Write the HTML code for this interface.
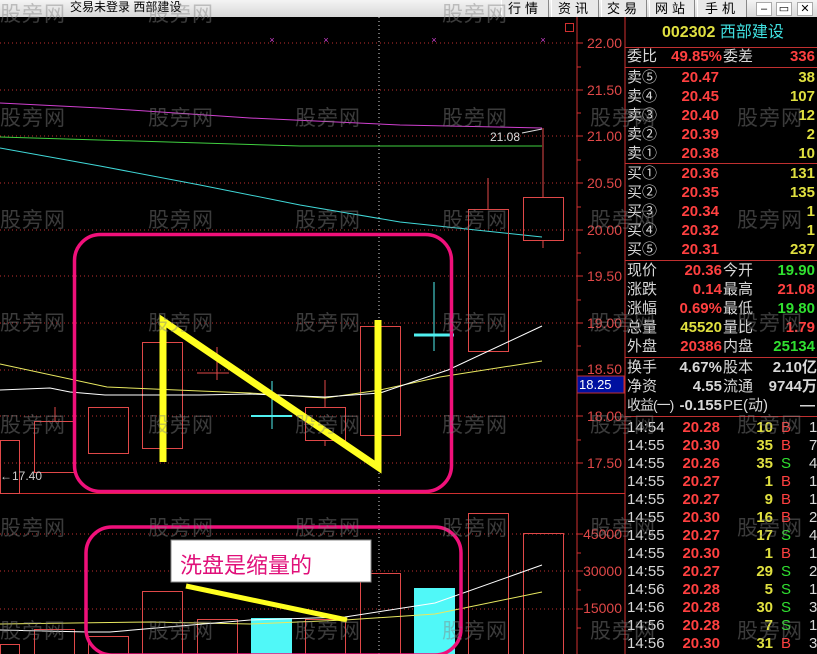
<!DOCTYPE html>
<html><head><meta charset="utf-8"><style>
*{margin:0;padding:0;box-sizing:border-box}
body{width:817px;height:654px;background:#000;overflow:hidden;position:relative;font-family:"Liberation Sans","Noto Sans CJK SC",sans-serif}
.a{position:absolute;white-space:nowrap}
#top{position:absolute;left:0;top:0;width:817px;height:17px;background:linear-gradient(#f4f4f4,#d8d8d8);}
.btn{position:absolute;top:0;height:17px;border-left:1px solid #fff;border-right:1px solid #888;background:#e8e8e8;font-size:13px;line-height:17px;text-align:center;color:#000;letter-spacing:4px}
.wc{position:absolute;top:2px;width:16px;height:14px;background:#fff;border:1px solid #aaa;font-size:11px;line-height:12px;text-align:center}
.p{font-size:15px;line-height:19px;position:absolute;white-space:nowrap}
.rr{font-weight:bold}
.w{color:#d8d8d8}.r{color:#ff4040}.y{color:#e0e040}.g{color:#30e030}.c{color:#40e0e0}
.rr{text-align:right}
.wm{position:absolute;color:rgba(130,130,130,.45);font-size:21px;white-space:nowrap;letter-spacing:1px}
</style></head><body>
<div id="top">
<div class="a" style="left:70px;top:0;font-size:12px;line-height:15px">交易未登录 西部建设</div>
<div class="btn" style="left:501px;width:48px">行情</div>
<div class="btn" style="left:551px;width:48px">资讯</div>
<div class="btn" style="left:601px;width:46px">交易</div>
<div class="btn" style="left:649px;width:46px">网站</div>
<div class="btn" style="left:697px;width:50px">手机</div>
<div class="wc" style="left:756px">–</div><div class="wc" style="left:776px">▭</div><div class="wc" style="left:797px">✕</div>
</div>
<svg class="a" style="left:0;top:0" width="817" height="654">
<g stroke="#c03030" stroke-dasharray="1 3" stroke-width="1">
<line x1="0" y1="43" x2="577" y2="43"/><line x1="0" y1="90" x2="577" y2="90"/><line x1="0" y1="136" x2="577" y2="136"/><line x1="0" y1="183" x2="577" y2="183"/><line x1="0" y1="230" x2="577" y2="230"/><line x1="0" y1="276" x2="577" y2="276"/><line x1="0" y1="323" x2="577" y2="323"/><line x1="0" y1="370" x2="577" y2="370"/><line x1="0" y1="416" x2="577" y2="416"/><line x1="0" y1="463" x2="577" y2="463"/>
<line x1="0" y1="534" x2="577" y2="534"/><line x1="0" y1="571" x2="577" y2="571"/><line x1="0" y1="609" x2="577" y2="609"/>
</g>
<line x1="379" y1="17" x2="379" y2="654" stroke="#ddd" stroke-dasharray="1 3"/>
<g stroke="#d03030" fill="none">
<line x1="577" y1="17" x2="577" y2="654"/><line x1="625" y1="17" x2="625" y2="654"/>
<line x1="0" y1="493.5" x2="625" y2="493.5"/>
<rect x="565.5" y="23.5" width="8" height="8"/>
</g>
<g stroke="#d03030">
<line x1="577" y1="43" x2="583" y2="43"/><line x1="577" y1="67" x2="581" y2="67"/><line x1="577" y1="90" x2="583" y2="90"/><line x1="577" y1="113" x2="581" y2="113"/><line x1="577" y1="136" x2="583" y2="136"/><line x1="577" y1="160" x2="581" y2="160"/><line x1="577" y1="183" x2="583" y2="183"/><line x1="577" y1="207" x2="581" y2="207"/><line x1="577" y1="230" x2="583" y2="230"/><line x1="577" y1="253" x2="581" y2="253"/><line x1="577" y1="276" x2="583" y2="276"/><line x1="577" y1="300" x2="581" y2="300"/><line x1="577" y1="323" x2="583" y2="323"/><line x1="577" y1="346" x2="581" y2="346"/><line x1="577" y1="370" x2="583" y2="370"/><line x1="577" y1="416" x2="583" y2="416"/><line x1="577" y1="440" x2="581" y2="440"/><line x1="577" y1="463" x2="583" y2="463"/>
<line x1="577" y1="534" x2="583" y2="534"/><line x1="577" y1="553" x2="581" y2="553"/><line x1="577" y1="571" x2="583" y2="571"/><line x1="577" y1="590" x2="581" y2="590"/><line x1="577" y1="609" x2="583" y2="609"/><line x1="577" y1="628" x2="581" y2="628"/>
</g>
<g fill="#e04848" font-size="14" text-anchor="end" font-family="Liberation Sans">
<text x="622" y="48">22.00</text><text x="622" y="95">21.50</text><text x="622" y="141">21.00</text><text x="622" y="188">20.50</text><text x="622" y="235">20.00</text><text x="622" y="281">19.50</text><text x="622" y="328">19.00</text><text x="622" y="374">18.50</text><text x="622" y="421">18.00</text><text x="622" y="468">17.50</text>
<text x="622" y="539">45000</text><text x="622" y="576">30000</text><text x="622" y="613">15000</text>
</g>
<rect x="577" y="376" width="47" height="17" fill="#0010a0" stroke="#c03030"/>
<text x="579" y="389" fill="#fff" font-size="13" font-family="Liberation Sans">18.25</text>
<g fill="#d040d0" font-size="9" text-anchor="middle"><text x="272" y="43">×</text><text x="326" y="43">×</text><text x="434" y="43">×</text><text x="543" y="43">×</text></g>
<polyline points="0,103 100,108 250,118 400,125 542,128" stroke="#d040d0" fill="none"/>
<polyline points="0,137 300,146 542,146" stroke="#40d040" fill="none"/>
<polyline points="0,148 100,166 200,185 300,205 400,222 542,237" stroke="#40d8d8" fill="none"/>
<text x="490" y="141" fill="#ddd" font-size="12">21.08</text>
<line x1="522" y1="133" x2="542" y2="129" stroke="#ddd"/>
<g stroke="#e04848" fill="none">
<rect x="0.5" y="440.5" width="19" height="53"/>
<rect x="34.5" y="421.5" width="40" height="51"/><line x1="55" y1="407" x2="55" y2="421"/>
<rect x="88.5" y="407.5" width="40" height="46"/>
<rect x="142.5" y="342.5" width="40" height="106"/>
<line x1="217" y1="347" x2="217" y2="380"/><line x1="197" y1="373" x2="229" y2="373"/>
<rect x="305.5" y="407.5" width="40" height="33"/><line x1="325" y1="380" x2="325" y2="407"/><line x1="325" y1="440" x2="325" y2="446"/>
<rect x="360.5" y="326.5" width="40" height="109"/>
<rect x="468.5" y="209.5" width="40" height="142"/><line x1="488" y1="178" x2="488" y2="209"/>
<rect x="523.5" y="197.5" width="40" height="43"/><line x1="543" y1="128" x2="543" y2="197"/><line x1="543" y1="240" x2="543" y2="248"/>
</g>
<g stroke="#50f0f0"><line x1="272" y1="381" x2="272" y2="429"/><line x1="251" y1="416" x2="292" y2="416" stroke-width="2"/><line x1="434" y1="282" x2="434" y2="351"/><line x1="414" y1="335" x2="454" y2="335" stroke-width="3"/></g>
<polyline points="0,364 107,387 200,391 250,393 325,398 380,390 440,377 542,361" stroke="#e8e860" fill="none"/>
<polyline points="0,390 50,388 70,392 105,395 200,395 250,394 325,397 380,393 448,370 542,326" stroke="#fff" fill="none"/>
<text x="0" y="480" fill="#ccc" font-size="12">←17.40</text>
<rect x="74.5" y="234.5" width="377" height="257" rx="26" stroke="#f0107a" stroke-width="3.5" fill="none"/>
<polyline points="163,462 163,321 378,467 378,320" stroke="#ffff20" stroke-width="7" fill="none" stroke-linejoin="miter"/>
<g stroke="#e04848" fill="none">
<rect x="0.5" y="644.5" width="19" height="10"/>
<rect x="34.5" y="629.5" width="40" height="25"/>
<rect x="88.5" y="636.5" width="40" height="18"/>
<rect x="142.5" y="591.5" width="40" height="63"/>
<rect x="197.5" y="619.5" width="40" height="35"/>
<rect x="305.5" y="619.5" width="40" height="35"/>
<rect x="360.5" y="573.5" width="40" height="81"/>
<rect x="468.5" y="513.5" width="40" height="141"/>
<rect x="523.5" y="533.5" width="40" height="121"/>
</g>
<rect x="251" y="618" width="41" height="36" fill="#50f8f8"/>
<rect x="414" y="588" width="41" height="66" fill="#50f8f8"/>
<polyline points="0,624 150,622 250,624 345,620 435,614 542,592" stroke="#e8e860" fill="none"/>
<polyline points="0,630 88,632 110,632 250,620 345,617 435,603 542,565" stroke="#fff" fill="none"/>
<rect x="86" y="527" width="375" height="128" rx="26" stroke="#f0107a" stroke-width="3.5" fill="none"/>
<rect x="171" y="540" width="200" height="42" fill="#fff" stroke="#888"/>
<text x="180" y="573" fill="#e0107a" font-size="22" font-family="Liberation Sans,Noto Sans CJK SC,sans-serif">洗盘是缩量的</text>
<line x1="186" y1="586" x2="347" y2="620" stroke="#ffff20" stroke-width="5"/>
<g stroke="#c03030">
<line x1="625" y1="47.5" x2="817" y2="47.5"/><line x1="625" y1="67.5" x2="817" y2="67.5"/><line x1="625" y1="163.5" x2="817" y2="163.5"/><line x1="625" y1="260.5" x2="817" y2="260.5"/><line x1="625" y1="357.5" x2="817" y2="357.5"/><line x1="625" y1="416.5" x2="817" y2="416.5"/>
</g>
</svg>
<div class="p" style="left:662px;top:23px;font-size:16px"><span class="y" style="font-weight:bold">002302</span> <span class="c">西部建设</span></div>
<div class="p w" style="left:627px;top:47px">委比</div><div class="p r rr" style="left:650px;top:47px;width:72px">49.85%</div><div class="p w" style="left:723px;top:47px">委差</div><div class="p r rr" style="left:760px;top:47px;width:55px">336</div>
<div style="position:absolute;left:0;top:0">
<div class="p w" style="left:627px;top:68px">卖⑤</div><div class="p r rr" style="left:650px;top:68px;width:69px">20.47</div><div class="p y rr" style="left:760px;top:68px;width:55px">38</div>
<div class="p w" style="left:627px;top:87px">卖④</div><div class="p r rr" style="left:650px;top:87px;width:69px">20.45</div><div class="p y rr" style="left:760px;top:87px;width:55px">107</div>
<div class="p w" style="left:627px;top:106px">卖③</div><div class="p r rr" style="left:650px;top:106px;width:69px">20.40</div><div class="p y rr" style="left:760px;top:106px;width:55px">12</div>
<div class="p w" style="left:627px;top:125px">卖②</div><div class="p r rr" style="left:650px;top:125px;width:69px">20.39</div><div class="p y rr" style="left:760px;top:125px;width:55px">2</div>
<div class="p w" style="left:627px;top:144px">卖①</div><div class="p r rr" style="left:650px;top:144px;width:69px">20.38</div><div class="p y rr" style="left:760px;top:144px;width:55px">10</div>
<div class="p w" style="left:627px;top:164px">买①</div><div class="p r rr" style="left:650px;top:164px;width:69px">20.36</div><div class="p y rr" style="left:760px;top:164px;width:55px">131</div>
<div class="p w" style="left:627px;top:183px">买②</div><div class="p r rr" style="left:650px;top:183px;width:69px">20.35</div><div class="p y rr" style="left:760px;top:183px;width:55px">135</div>
<div class="p w" style="left:627px;top:202px">买③</div><div class="p r rr" style="left:650px;top:202px;width:69px">20.34</div><div class="p y rr" style="left:760px;top:202px;width:55px">1</div>
<div class="p w" style="left:627px;top:221px">买④</div><div class="p r rr" style="left:650px;top:221px;width:69px">20.32</div><div class="p y rr" style="left:760px;top:221px;width:55px">1</div>
<div class="p w" style="left:627px;top:240px">买⑤</div><div class="p r rr" style="left:650px;top:240px;width:69px">20.31</div><div class="p y rr" style="left:760px;top:240px;width:55px">237</div>
<div class="p w" style="left:627px;top:261px">现价</div><div class="p r rr" style="left:650px;top:261px;width:72px">20.36</div><div class="p w" style="left:723px;top:261px">今开</div><div class="p g rr" style="left:760px;top:261px;width:55px">19.90</div>
<div class="p w" style="left:627px;top:280px">涨跌</div><div class="p r rr" style="left:650px;top:280px;width:72px">0.14</div><div class="p w" style="left:723px;top:280px">最高</div><div class="p r rr" style="left:760px;top:280px;width:55px">21.08</div>
<div class="p w" style="left:627px;top:299px">涨幅</div><div class="p r rr" style="left:650px;top:299px;width:72px">0.69%</div><div class="p w" style="left:723px;top:299px">最低</div><div class="p g rr" style="left:760px;top:299px;width:55px">19.80</div>
<div class="p w" style="left:627px;top:318px">总量</div><div class="p y rr" style="left:650px;top:318px;width:72px">45520</div><div class="p w" style="left:723px;top:318px">量比</div><div class="p r rr" style="left:760px;top:318px;width:55px">1.79</div>
<div class="p w" style="left:627px;top:337px">外盘</div><div class="p r rr" style="left:650px;top:337px;width:72px">20386</div><div class="p w" style="left:723px;top:337px">内盘</div><div class="p g rr" style="left:760px;top:337px;width:55px">25134</div>
<div class="p w" style="left:627px;top:358px">换手</div><div class="p w rr" style="left:650px;top:358px;width:72px">4.67%</div><div class="p w" style="left:723px;top:358px">股本</div><div class="p w rr" style="left:760px;top:358px;width:57px">2.10亿</div>
<div class="p w" style="left:627px;top:377px">净资</div><div class="p w rr" style="left:650px;top:377px;width:72px">4.55</div><div class="p w" style="left:723px;top:377px">流通</div><div class="p w rr" style="left:750px;top:377px;width:67px">9744万</div>
<div class="p w" style="left:627px;top:396px;font-size:14px;letter-spacing:-1px">收益(一)</div><div class="p w rr" style="left:650px;top:396px;width:72px">-0.155</div><div class="p w" style="left:723px;top:396px">PE(动)</div><div class="p w rr" style="left:760px;top:396px;width:55px">—</div>
</div>
<div style="position:absolute;left:0;top:0">
<div class="p w" style="left:627px;top:418px">14:54</div><div class="p r rr" style="left:660px;top:418px;width:60px">20.28</div><div class="p y rr" style="left:740px;top:418px;width:33px">10</div><div class="p r" style="left:781px;top:418px">B</div><div class="p w" style="left:809px;top:418px">1</div>
<div class="p w" style="left:627px;top:436px">14:55</div><div class="p r rr" style="left:660px;top:436px;width:60px">20.30</div><div class="p y rr" style="left:740px;top:436px;width:33px">35</div><div class="p r" style="left:781px;top:436px">B</div><div class="p w" style="left:809px;top:436px">7</div>
<div class="p w" style="left:627px;top:454px">14:55</div><div class="p r rr" style="left:660px;top:454px;width:60px">20.26</div><div class="p y rr" style="left:740px;top:454px;width:33px">35</div><div class="p g" style="left:781px;top:454px">S</div><div class="p w" style="left:809px;top:454px">4</div>
<div class="p w" style="left:627px;top:472px">14:55</div><div class="p r rr" style="left:660px;top:472px;width:60px">20.27</div><div class="p y rr" style="left:740px;top:472px;width:33px">1</div><div class="p r" style="left:781px;top:472px">B</div><div class="p w" style="left:809px;top:472px">1</div>
<div class="p w" style="left:627px;top:490px">14:55</div><div class="p r rr" style="left:660px;top:490px;width:60px">20.27</div><div class="p y rr" style="left:740px;top:490px;width:33px">9</div><div class="p r" style="left:781px;top:490px">B</div><div class="p w" style="left:809px;top:490px">1</div>
<div class="p w" style="left:627px;top:508px">14:55</div><div class="p r rr" style="left:660px;top:508px;width:60px">20.30</div><div class="p y rr" style="left:740px;top:508px;width:33px">16</div><div class="p r" style="left:781px;top:508px">B</div><div class="p w" style="left:809px;top:508px">2</div>
<div class="p w" style="left:627px;top:526px">14:55</div><div class="p r rr" style="left:660px;top:526px;width:60px">20.27</div><div class="p y rr" style="left:740px;top:526px;width:33px">17</div><div class="p g" style="left:781px;top:526px">S</div><div class="p w" style="left:809px;top:526px">4</div>
<div class="p w" style="left:627px;top:544px">14:55</div><div class="p r rr" style="left:660px;top:544px;width:60px">20.30</div><div class="p y rr" style="left:740px;top:544px;width:33px">1</div><div class="p r" style="left:781px;top:544px">B</div><div class="p w" style="left:809px;top:544px">1</div>
<div class="p w" style="left:627px;top:562px">14:55</div><div class="p r rr" style="left:660px;top:562px;width:60px">20.27</div><div class="p y rr" style="left:740px;top:562px;width:33px">29</div><div class="p g" style="left:781px;top:562px">S</div><div class="p w" style="left:809px;top:562px">2</div>
<div class="p w" style="left:627px;top:580px">14:56</div><div class="p r rr" style="left:660px;top:580px;width:60px">20.28</div><div class="p y rr" style="left:740px;top:580px;width:33px">5</div><div class="p g" style="left:781px;top:580px">S</div><div class="p w" style="left:809px;top:580px">1</div>
<div class="p w" style="left:627px;top:598px">14:56</div><div class="p r rr" style="left:660px;top:598px;width:60px">20.28</div><div class="p y rr" style="left:740px;top:598px;width:33px">30</div><div class="p g" style="left:781px;top:598px">S</div><div class="p w" style="left:809px;top:598px">3</div>
<div class="p w" style="left:627px;top:616px">14:56</div><div class="p r rr" style="left:660px;top:616px;width:60px">20.28</div><div class="p y rr" style="left:740px;top:616px;width:33px">7</div><div class="p g" style="left:781px;top:616px">S</div><div class="p w" style="left:809px;top:616px">1</div>
<div class="p w" style="left:627px;top:634px">14:56</div><div class="p r rr" style="left:660px;top:634px;width:60px">20.30</div><div class="p y rr" style="left:740px;top:634px;width:33px">31</div><div class="p r" style="left:781px;top:634px">B</div><div class="p w" style="left:809px;top:634px">3</div>
</div>
<div class="wm" style="left:0;top:-2px">股旁网</div><div class="wm" style="left:148px;top:-2px">股旁网</div><div class="wm" style="left:442px;top:-2px">股旁网</div>
<div class="wm" style="left:0;top:102px">股旁网</div><div class="wm" style="left:148px;top:102px">股旁网</div><div class="wm" style="left:295px;top:102px">股旁网</div><div class="wm" style="left:442px;top:102px">股旁网</div><div class="wm" style="left:590px;top:102px">股旁网</div><div class="wm" style="left:737px;top:102px">股旁网</div>
<div class="wm" style="left:0;top:204px">股旁网</div><div class="wm" style="left:148px;top:204px">股旁网</div><div class="wm" style="left:295px;top:204px">股旁网</div><div class="wm" style="left:442px;top:204px">股旁网</div><div class="wm" style="left:590px;top:204px">股旁网</div><div class="wm" style="left:737px;top:204px">股旁网</div>
<div class="wm" style="left:0;top:307px">股旁网</div><div class="wm" style="left:148px;top:307px">股旁网</div><div class="wm" style="left:295px;top:307px">股旁网</div><div class="wm" style="left:442px;top:307px">股旁网</div><div class="wm" style="left:590px;top:307px">股旁网</div><div class="wm" style="left:737px;top:307px">股旁网</div>
<div class="wm" style="left:0;top:409px">股旁网</div><div class="wm" style="left:148px;top:409px">股旁网</div><div class="wm" style="left:295px;top:409px">股旁网</div><div class="wm" style="left:442px;top:409px">股旁网</div><div class="wm" style="left:590px;top:409px">股旁网</div><div class="wm" style="left:737px;top:409px">股旁网</div>
<div class="wm" style="left:0;top:512px">股旁网</div><div class="wm" style="left:148px;top:512px">股旁网</div><div class="wm" style="left:295px;top:512px">股旁网</div><div class="wm" style="left:442px;top:512px">股旁网</div><div class="wm" style="left:590px;top:512px">股旁网</div><div class="wm" style="left:737px;top:512px">股旁网</div>
<div class="wm" style="left:0;top:615px">股旁网</div><div class="wm" style="left:148px;top:615px">股旁网</div><div class="wm" style="left:295px;top:615px">股旁网</div><div class="wm" style="left:442px;top:615px">股旁网</div><div class="wm" style="left:590px;top:615px">股旁网</div><div class="wm" style="left:737px;top:615px">股旁网</div>
</body></html>
